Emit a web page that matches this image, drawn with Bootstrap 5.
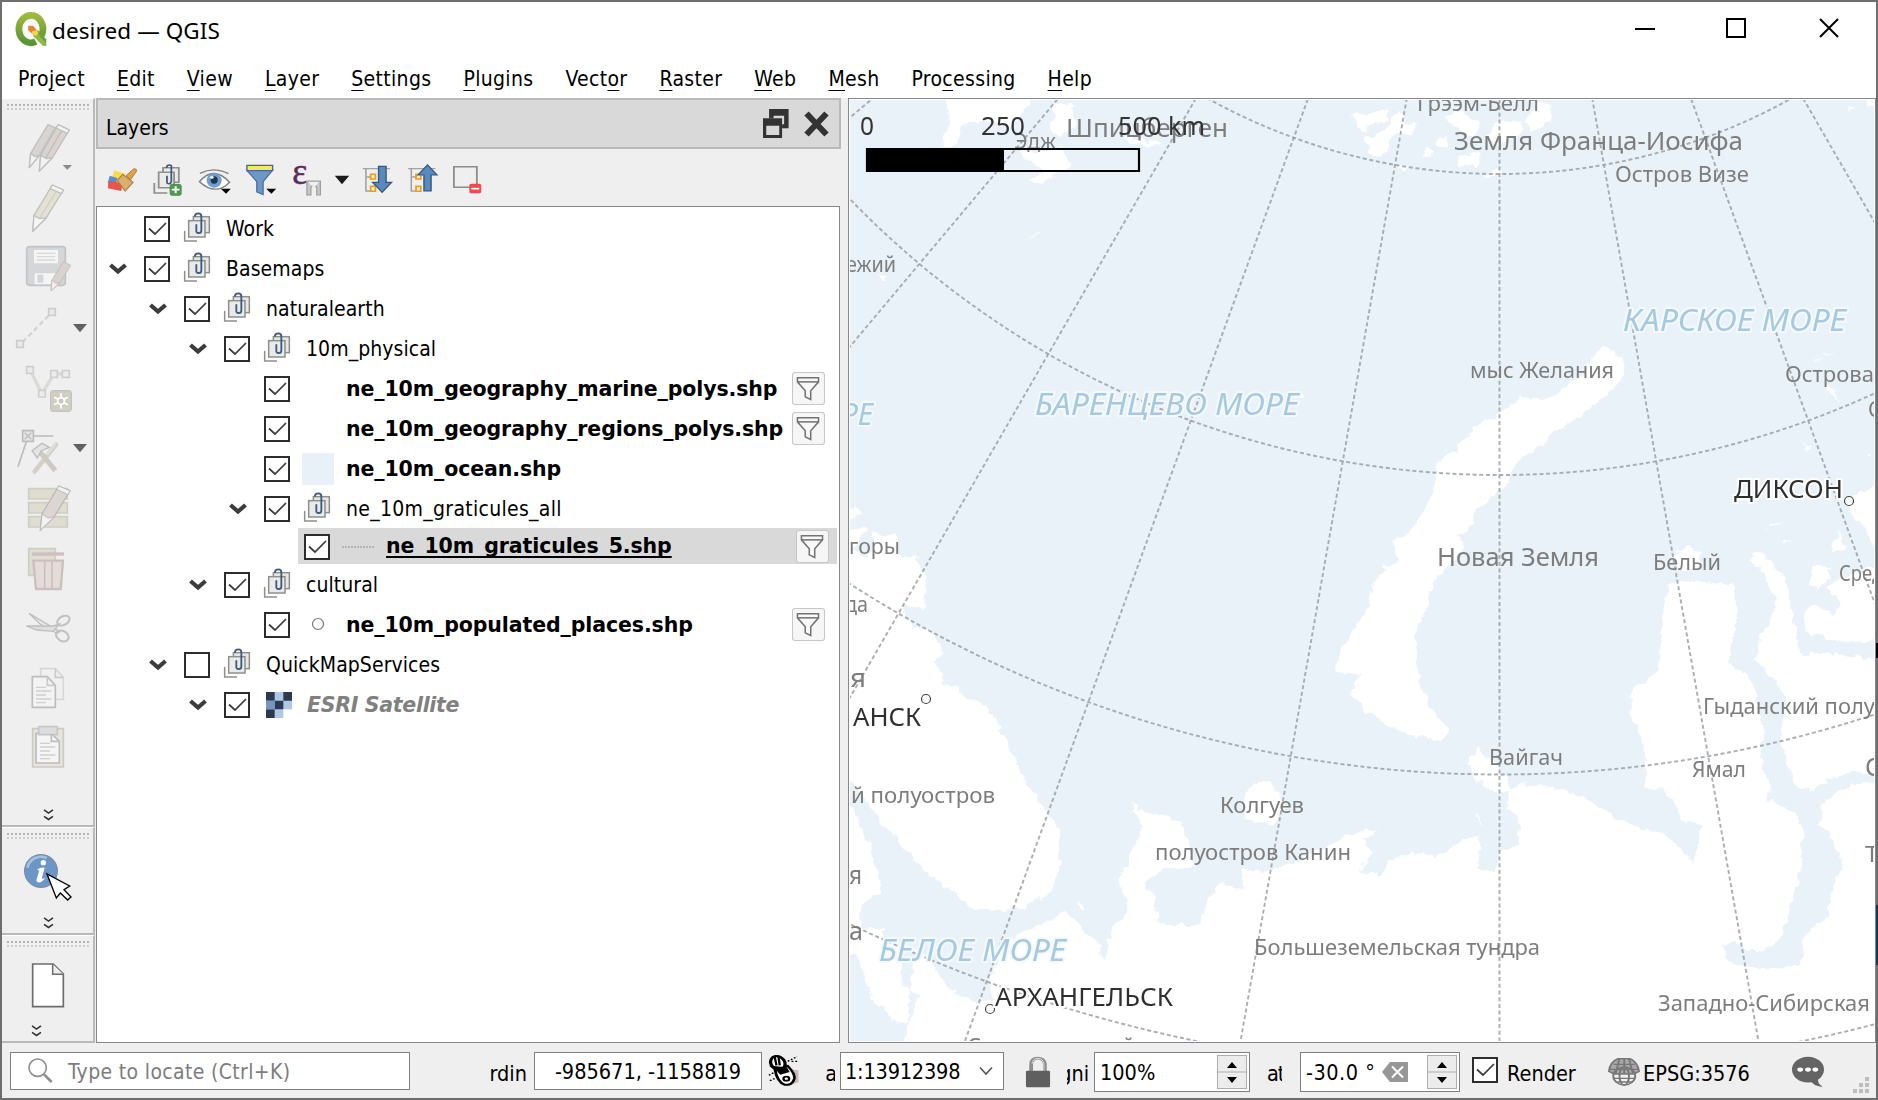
<!DOCTYPE html>
<html lang="en">
<head>
<meta charset="utf-8">
<title>desired — QGIS</title>
<link rel="stylesheet" href="https://cdn.jsdelivr.net/npm/bootstrap@5.3.0/dist/css/bootstrap.min.css">
<style>
html,body{height:1100px;overflow:hidden}
body{width:1878px;font-family:"DejaVu Sans Condensed","DejaVu Sans",sans-serif;font-stretch:condensed;font-size:21px;line-height:26px;color:#000;background:#efefef;white-space:nowrap}
.win{width:1878px;height:1100px;border:2px solid #6e6e6e;background:#efefef}
svg{display:block;flex:none}
.titlebar{height:56px;background:#fff;padding:0 37px 0 13px}
.wtitle{font-family:"Noto Sans",sans-serif;font-size:22.5px;letter-spacing:.1px;margin-left:5px;padding-top:2px}
.menus{height:40px;background:#fff;padding:8px 0 0 16px;gap:32px}
.menus span{letter-spacing:.33px}
.menus u{text-underline-offset:4px;text-decoration-thickness:1.3px;text-decoration-skip-ink:none}
.lyr u{text-underline-offset:3px;text-decoration-thickness:2px;text-decoration-skip-ink:none}
.tools{width:93px}
.toolsec{border-right:2px solid #b9b9b9;border-bottom:2px solid #b9b9b9;border-top:1px solid #fff;width:93px}
.dock{width:745px;margin-left:1px}
.docktitle{height:51px;border:2px solid #b9b9b9;background:#d9d9d9;padding:0 9px 0 8px}
.docktitle span{letter-spacing:0;padding-top:8px}
.ltools{height:57px;padding:14px 0 0 5px}
.ltools svg{margin-right:-.15px}
.tree{width:744px;height:837px;background:#fff;border:1px solid #84878b;padding-top:1px}
.lrow{height:40px;padding:2px 0 0 0}
.lrow.sel{height:36px;padding:1px 8px 0 6px;background:#d9d9d9;margin:0 2px 0 201px}
.lvl0{margin-left:9px}.lvl1{margin-left:49px}.lvl2{margin-left:89px}.lvl3{margin-left:129px}
.arw{width:22px;height:26px;margin-right:16px;overflow:visible}
.chk{width:26px;height:26px;border:2px solid #2d2d2d;background:#fff;flex:none}
.gi{width:26px;height:26px;overflow:visible;margin:0 16px 0 14px}
.sym{width:32px;height:32px;margin:0 12px 0 12px;flex:none}
.lyr{font-family:"DejaVu Sans",sans-serif;font-stretch:normal;font-size:20.5px;font-weight:700;letter-spacing:-.1px;padding-bottom:1px}
.lyr.fst-italic{letter-spacing:-.3px}
.grp{letter-spacing:.07px;padding-bottom:1px}
.grp.wide{letter-spacing:.3px}
.fbtn{width:33px;height:33px;margin:-1px 14px 0 auto}
.mapbox{width:1028px;height:945px;border:1px solid #84878b;background:#fff;margin-left:7px;padding:1px}
.status{height:55px;padding-top:9px}
.fld{height:38px;border:1px solid #7f7f7f;background:#fff;flex:none}
.spin{height:40px}
.clip{overflow:hidden;height:30px;flex:none;margin-top:7px}
.st{font-size:21.5px;letter-spacing:0;flex:none;line-height:30px}
.updn{width:30px;height:34px;border:1px solid #adadad;background:#ececec;margin:2px}
.m{font-family:"Noto Sans","Open Sans",sans-serif;fill:#7d7d7d}
.halo{paint-order:stroke;stroke:#f4f9fc;stroke-width:4px;stroke-linejoin:round}
.sea{font-style:italic;fill:#a5c9e1}
.city{fill:#2f2f2f;paint-order:stroke;stroke:#fff;stroke-width:4px}
</style>
<script src="https://cdn.jsdelivr.net/npm/bootstrap@5.3.0/dist/js/bootstrap.bundle.min.js"></script>
</head>
<body>
<svg width="0" height="0" class="position-absolute">
<symbol id="ck" viewBox="0 0 22 22"><path d="M3 10.5 9 16 20 5" fill="none" stroke="#3b3b3b" stroke-width="1.7"/></symbol>
<symbol id="ar" viewBox="0 0 22 26"><path d="M4.500 9 12 15.500 19.500 9" fill="none" stroke="#3c3c3c" stroke-width="4.200"/></symbol>
<symbol id="gr" viewBox="282 48 78 78" overflow="visible">
<path d="M284 93V123H321" fill="none" stroke="#8e908c" stroke-width="4.500"/>
<rect x="310" y="50" width="48" height="48" fill="#e8e9e6" stroke="#8e908c" stroke-width="4.500"/>
<rect x="296" y="62" width="49" height="49" fill="#eaebe9" stroke="#8e908c" stroke-width="4.500"/>
<path d="M315 50V47Q316 40 325 40T334 48V92Q334 99 326 99T319 92V73" fill="none" stroke="#3d5a80" stroke-width="5.500"/></symbol>
<symbol id="fl" viewBox="877 37 97 97"><rect x="878.500" y="38.500" width="94" height="94" rx="8" fill="#f6f6f6" stroke="#c6c6c6" stroke-width="3"/>
<path d="M893 54H955V66L932 92V118L916 110V92L893 66Z" fill="#f8f8f8" stroke="#737373" stroke-width="4.500"/><path d="M893 66H955" stroke="#737373" stroke-width="4.500"/></symbol>
<symbol id="dv" viewBox="130 0 34 44"><path d="M133 6 147 16 161 6M133 26 147 36 161 26" fill="none" stroke="#333" stroke-width="5"/></symbol>
<symbol id="grip" viewBox="0 0 84 8"><path d="M1 2H84" stroke="#b4b4b4" stroke-width="2.200" stroke-dasharray="2 2"/><path d="M1 6H84" stroke="#c4c4c4" stroke-width="1.500" stroke-dasharray="2 2"/></symbol>
</svg>

<div class="win d-flex flex-column">
  <header class="titlebar d-flex align-items-center">
    <svg width="32" height="36" viewBox="38 40 80 92" preserveAspectRatio="none" style="margin-top:-2px"><defs><linearGradient id="qg" x2="0" y2="1"><stop stop-color="#9fb93a"/><stop offset="1" stop-color="#589632"/></linearGradient></defs><path d="M90 118A30 35 0 1 1 104 103" fill="none" stroke="url(#qg)" stroke-width="17"/><path d="M84 94 96 90 116 112V129H108L84 104Z" fill="#6ba23c"/><path d="M84 104 92 94 116 124V129H108Z" fill="#93b945"/><path d="M71 78H83L95 92 85 102 71 89Z" fill="#ee7f2d"/><path d="M81 91 92 89 97 97 89 104 80 99Z" fill="#f6d64c"/></svg>
    <div class="wtitle">desired — QGIS</div>
    <div class="d-flex ms-auto align-items-center pb-1">
      <svg width="20" height="20"><path d="M0 11H20" stroke="#000" stroke-width="2"/></svg>
      <svg width="20" height="20" style="margin:0 73px 0 71px"><path d="M1 1H19V19H1Z" fill="none" stroke="#000" stroke-width="2"/></svg>
      <svg width="20" height="20"><path d="M1 1 19 19M19 1 1 19" stroke="#000" stroke-width="2"/></svg>
    </div>
  </header>
  <nav class="menus d-flex"><span>Pro<u>j</u>ect</span><span><u>E</u>dit</span><span><u>V</u>iew</span><span><u>L</u>ayer</span><span><u>S</u>ettings</span><span><u>P</u>lugins</span><span>Vect<u>o</u>r</span><span><u>R</u>aster</span><span><u>W</u>eb</span><span><u>M</u>esh</span><span>Pro<u>c</u>essing</span><span><u>H</u>elp</span></nav>

  <main class="d-flex" style="height:945px">
    <aside class="tools d-flex flex-column">
      <section class="toolsec" style="height:729px">
        <svg width="84" height="8" class="ms-1 mt-1"><use href="#grip"/></svg><div style="height:7px"></div>
        <svg width="91" height="60" viewBox="6 84 273 180" stroke-linejoin="round"><g fill="#d9d4d0" stroke="#c0c0c0" stroke-width="4"><path d="M144 104 166 113 118 196 88 233 92 190Z"/><path d="M175 104 208 120 158 202 118 243 122 196Z"/><path d="M92 190 106 200 118 196 88 233ZM122 196 140 206 158 202 118 243ZM175 104 208 120 202 130 168 114Z" fill="#f2f2f2"/><path d="M185 122 138 202" stroke="#c8bcb8"/></g><path d="M188 225H216L202 239Z" fill="#8b8b8b"/></svg>
        <svg width="91" height="60" viewBox="6 264 273 180" stroke-linejoin="round"><g fill="#e2e1d4" stroke="#c0c0bd" stroke-width="4"><path d="M157 285 190 300 139 383 98 424 102 376Z"/><path d="M102 376 119 386 139 383 98 424ZM157 285 190 300 185 311 150 296Z" fill="#f5f5f5"/><path d="M168 306 120 382" stroke="#d0cfc4"/></g></svg>
        <svg width="91" height="60" viewBox="6 444 273 180" stroke-linejoin="round"><rect x="80" y="470" width="116" height="116" rx="9" fill="#d5d6d7" stroke="#c0c4c7" stroke-width="5"/><path d="M102 480H174V520H102ZM104 550H170V583H104Z" fill="#f5f5f5"/><path d="M110 490H166M110 500H166M110 510H166" stroke="#d8d8d8" stroke-width="4"/><path d="M112 554H130V578H112Z" fill="#d5d6d7"/><path d="M190 515 212 526 180 578 153 603 156 570Z" fill="#d9d2ce" stroke="#c4c0be" stroke-width="3"/><path d="M156 570 168 580 180 578 153 603Z" fill="#eee" stroke="#c4c0be" stroke-width="3"/></svg>
        <svg width="91" height="60" viewBox="6 624 273 180"><path d="M68 756 147 676" stroke="#d2d4d2" stroke-width="7" stroke-dasharray="15 9"/><g fill="#e9e9e9" stroke="#cdcdcd" stroke-width="5"><path d="M146 656H166V676H146ZM50 752H70V772H50Z"/></g><path d="M219 702H261L240 727Z" fill="#5f6162"/></svg>
        <svg width="91" height="60" viewBox="6 804 273 180"><path d="M90 840 126 911 162 852H197" fill="none" stroke="#d9dbd6" stroke-width="10"/><g fill="#ebebeb" stroke="#cfcfcf" stroke-width="5"><path d="M80 830H100V850H80ZM152 842H172V862H152ZM187 842H208V862H187ZM116 901H136V921H116Z"/></g><rect x="152" y="902" width="62" height="62" rx="9" fill="#d0cfc3" stroke="#c5c4b8" stroke-width="4"/><path d="M183 910V956M163 922 203 944M203 922 163 944" stroke="#fff" stroke-width="5"/><circle cx="183" cy="933" r="10" fill="#c9c8bd" stroke="#fff" stroke-width="5"/></svg>
        <svg width="91" height="60" viewBox="6 984 273 180"><path d="M82 1046 54 1130M100 1038H160" stroke="#bcbcbc" stroke-width="5"/><path d="M68 1022H100V1054H68Z" fill="#e6e6e6" stroke="#bcbcbc" stroke-width="5"/><path d="M74 1028 94 1048M94 1028 74 1048" stroke="#bcbcbc" stroke-width="4"/><path d="M168 1064 104 1144" stroke="#d3d1c6" stroke-width="14" stroke-linecap="round"/><path d="M120 1086 166 1142" stroke="#cdcabf" stroke-width="15"/><path d="M96 1082 126 1060 148 1072 124 1082 112 1104Z" fill="#e4e4e4" stroke="#bcbcbc" stroke-width="4"/><path d="M140 1094 168 1060" stroke="#ddd" stroke-width="8"/><path d="M219 1062H261L240 1087Z" fill="#5f6162"/></svg>
        <svg width="91" height="60" viewBox="6 54 273 180"><g fill="#dfddcf" stroke="#cfcec3" stroke-width="5"><path d="M86 86H202V117H86ZM86 128H202V159H86ZM86 170H202V201H86Z"/></g><path d="M176 78 210 92 163 170 121 211 126 162Z" fill="#ddd5d1" stroke="#bbb" stroke-width="4"/><path d="M126 162 144 174 163 170 121 211ZM176 78 210 92 204 104 170 88Z" fill="#f2f2f2" stroke="#bbb" stroke-width="3"/></svg>
        <svg width="91" height="60" viewBox="6 234 273 180"><path d="M86 266H166V346H86Z" fill="#dfddcf" stroke="#cfcec3" stroke-width="5"/><path d="M100 302H189L182 387H108Z" fill="#e5dcda" stroke="#cdbfbf" stroke-width="7"/><path d="M96 282H192" stroke="#cdbfbf" stroke-width="10"/><path d="M134 304V386M156 304V386" stroke="#cdbfbf" stroke-width="5"/></svg>
        <svg width="91" height="60" viewBox="6 414 273 180" fill="none" stroke="#bfbfbf" stroke-width="4"><path d="M87 460 180 515 170 520 120 492Z" fill="#e6e6e6"/><path d="M79 498 160 498 178 492 160 514 110 510Z" fill="#dedede"/><ellipse cx="190" cy="482" rx="20" ry="13" transform="rotate(-30 190 482)" stroke="#c4bfbf" stroke-width="6"/><ellipse cx="187" cy="528" rx="20" ry="15" transform="rotate(30 187 528)" stroke="#c4bfbf" stroke-width="6"/></svg>
        <svg width="91" height="60" viewBox="6 594 273 180" stroke-width="5"><path d="M122 626H166L190 652V718H122Z" fill="#f0f0f0" stroke="#d8d8d8"/><path d="M97 650H142L166 676V742H97Z" fill="#f3f3f3" stroke="#bdbdbd"/><path d="M142 650V676H166M166 626V652H190" fill="none" stroke="#c9c9c9"/><path d="M108 682H138M108 693H154M108 705H138M108 717H154M108 728H138" stroke="#cfcfcf" stroke-width="4"/></svg>
        <svg width="91" height="60" viewBox="6 774 273 180" stroke-width="5"><path d="M98 806H190V921H98Z" fill="#e6e5df" stroke="#cccac1"/><path d="M108 820H154L178 844V909H108Z" fill="#f5f5f5" stroke="#bdbdbd"/><path d="M116 800H172V824H116Z" fill="#ddd" stroke="#c6c6c6"/><path d="M154 822V844H178" fill="none" stroke="#bdbdbd"/><path d="M120 850H150M120 861H166M120 873H150M120 885H166M120 896H150" stroke="#cfcfcf" stroke-width="4"/></svg>
        <svg width="11" height="14" style="margin:30px 0 0 41px"><use href="#dv"/></svg>
      </section>
      <section class="toolsec" style="height:108px">
        <svg width="84" height="8" class="ms-1 mt-1"><use href="#grip"/></svg>
        <svg width="91" height="74" viewBox="6 122 273 222"><circle cx="123" cy="215" r="49" fill="#6b97c8" stroke="#7d8fa5" stroke-width="4"/><path d="M82 205A42 42 0 0 1 140 176" fill="none" stroke="#a5c1e0" stroke-width="8"/><circle cx="130" cy="190" r="8" fill="#fff"/><path d="M111 211Q120 203 134 205L125 237Q129 240 135 236 126 251 113 249 107 246 110 239L118 214Z" fill="#fff"/><path d="M141 224 169 296 181 281 203 302 213 293 192 271 209 260Z" fill="#fff" stroke="#000" stroke-width="4"/></svg>
        <svg width="11" height="14" style="margin:2px 0 0 41px"><use href="#dv"/></svg>
      </section>
      <section class="toolsec" style="height:108px">
        <svg width="84" height="8" class="ms-1 mt-1"><use href="#grip"/></svg>
        <svg width="91" height="74" viewBox="6 446 273 222"><path d="M98 494H160L190 524V622H98Z" fill="#fff" stroke="#6c6c6c" stroke-width="5"/><path d="M158 494V525H190" fill="#eee" stroke="#6c6c6c" stroke-width="4.500"/></svg>
        <svg width="11" height="14" style="margin:2px 0 0 29px"><use href="#dv"/></svg>
      </section>
    </aside>

    <section class="dock">
      <div class="docktitle d-flex align-items-center"><span>Layers</span>
        <svg class="ms-auto" width="26" height="29" viewBox="398 330 64 87" preserveAspectRatio="none"><path d="M418 330H461V388H445V376H450V350H424V358H413V330Z" fill="#333"/><path d="M398 358H445V417H398ZM406 380V408H438V380Z" fill="#333" fill-rule="evenodd"/></svg>
        <svg width="27" height="27" viewBox="0 0 27 27" style="margin-left:14px"><path d="M3.500 3.500 23.500 24.500M23.500 3.500 3.500 24.500" stroke="#333" stroke-width="6"/></svg>
      </div>
      <div class="ltools d-flex">
        <svg width="45.500" height="36.700" viewBox="255 490 115 110" preserveAspectRatio="none"><path d="M288 512 316 522 300 550 281 545Z" fill="#f7dc4e"/><path d="M277 528 296 535 292 560 272 550Z" fill="#5b8dd6"/><path d="M274 545 310 550 306 574 272 566Z" fill="#e8554d"/><path d="M318 528 338 507Q346 507 345 514L330 540Z" fill="#e0a344" stroke="#9a6a22" stroke-width="2"/><path d="M296 542 310 524 336 548 316 574Z" fill="#dcb06b" stroke="#b57f3e" stroke-width="3"/></svg>
        <svg width="45.500" height="36.700" viewBox="370 490 115 110" preserveAspectRatio="none"><path d="M391 550V580H424" fill="none" stroke="#8e908c" stroke-width="4.500"/><g fill="#eaebe9" stroke="#8e908c" stroke-width="4.500"><path d="M413 504H453V548H413Z"/><path d="M402 518H441V564H402Z"/></g><path d="M422 505Q422 496 429 496T434 504V545Q434 552 428 552T423 545V528" fill="none" stroke="#3d5a80" stroke-width="4.500"/><rect x="431" y="554" width="28" height="33" rx="5" fill="#4f9a51" stroke="#3f7f43" stroke-width="2"/><path d="M445 560V581M435 570H455" stroke="#fff" stroke-width="5"/></svg>
        <svg width="45.500" height="36.700" viewBox="485 490 115 110" preserveAspectRatio="none"><path d="M505 521Q540 500 577 522" fill="none" stroke="#7d8287" stroke-width="4"/><path d="M504 546Q540 496 580 548 545 590 504 546Z" fill="#fff" stroke="#7d8287" stroke-width="4"/><ellipse cx="541" cy="542" rx="19" ry="22" fill="#6f9dd2"/><ellipse cx="541" cy="541" rx="9" ry="11" fill="#1f3550"/><circle cx="535" cy="533" r="5" fill="#dceaf8"/><path d="M558 567H583L571 582Z"/></svg>
        <svg width="45.500" height="36.700" viewBox="600 490 115 110" preserveAspectRatio="none"><path d="M625 512 650 546V577L666 585V546L690 512Z" fill="#6c97c9" stroke="#41699a" stroke-width="3"/><path d="M625 497H690V513H625Z" fill="#f5ea5e" stroke="#41699a" stroke-width="3.500"/><path d="M674 567H699L687 582Z"/></svg>
        <svg width="45.500" height="36.700" viewBox="715 490 115 110" preserveAspectRatio="none"><text x="741" y="554" font-family="Liberation Serif,serif" font-size="112" textLength="38" lengthAdjust="spacingAndGlyphs" fill="#5a2a63" stroke="#5a2a63" stroke-width="1.500">ε</text><path d="M778 544H812V586H803V564L795 550 788 564V586H778Z" fill="#c9c9c9" stroke="#9b9b9b" stroke-width="3"/><path d="M782 547H808L801 558H790Z" fill="#f2f2f2"/></svg>
        <svg width="28" height="36.700" viewBox="830 490 70 110" preserveAspectRatio="none"><path d="M847 528H883L865 554Z" fill="#1a1a1a"/></svg>
        <svg width="45.500" height="36.700" viewBox="900 490 115 110" preserveAspectRatio="none"><path d="M917 507H986M925 507V574H945M925 532H940" fill="none" stroke="#a3a3a3" stroke-width="4"/><path d="M937 524H949V538H937ZM937 560H949V575H937Z" fill="#fff3b8" stroke="#f29a1d" stroke-width="4.500"/><path d="M957 500H976V548H990L966 578 942 548H957Z" fill="#5b89bd" stroke="#32587f" stroke-width="3.500"/></svg>
        <svg width="45.500" height="36.700" viewBox="1015 490 115 110" preserveAspectRatio="none"><path d="M1033 507H1102M1041 507V574H1061M1041 532H1056" fill="none" stroke="#a3a3a3" stroke-width="4"/><path d="M1053 524H1065V538H1053ZM1053 560H1065V575H1053Z" fill="#fff3b8" stroke="#f29a1d" stroke-width="4.500"/><path d="M1073 574H1091V526H1106L1082 496 1058 526H1073Z" fill="#5b89bd" stroke="#32587f" stroke-width="3.500"/></svg>
        <svg width="45.500" height="36.700" viewBox="1130 490 115 110" preserveAspectRatio="none"><path d="M1150 501H1208V563H1150Z" fill="#efefef" stroke="#8b8d89" stroke-width="4.500"/><rect x="1189" y="552" width="30" height="29" rx="5" fill="#ee4b50"/><path d="M1194 567H1214" stroke="#fff" stroke-width="5"/></svg>
      </div>
      <div class="tree">
        <div class="lrow d-flex align-items-center lvl0"><div class="arw"></div><div class="chk"><svg width="22" height="22"><use href="#ck"/></svg></div><svg class="gi"><use href="#gr"/></svg><span class="grp">Work</span></div>
        <div class="lrow d-flex align-items-center lvl0"><svg class="arw"><use href="#ar"/></svg><div class="chk"><svg width="22" height="22"><use href="#ck"/></svg></div><svg class="gi"><use href="#gr"/></svg><span class="grp">Basemaps</span></div>
        <div class="lrow d-flex align-items-center lvl1"><svg class="arw"><use href="#ar"/></svg><div class="chk"><svg width="22" height="22"><use href="#ck"/></svg></div><svg class="gi"><use href="#gr"/></svg><span class="grp">naturalearth</span></div>
        <div class="lrow d-flex align-items-center lvl2"><svg class="arw"><use href="#ar"/></svg><div class="chk"><svg width="22" height="22"><use href="#ck"/></svg></div><svg class="gi"><use href="#gr"/></svg><span class="grp">10m_physical</span></div>
        <div class="lrow d-flex align-items-center lvl3"><div class="arw"></div><div class="chk"><svg width="22" height="22"><use href="#ck"/></svg></div><div class="sym"></div><span class="lyr">ne_10m_geography_marine_polys.shp</span><svg class="fbtn"><use href="#fl"/></svg></div>
        <div class="lrow d-flex align-items-center lvl3"><div class="arw"></div><div class="chk"><svg width="22" height="22"><use href="#ck"/></svg></div><div class="sym"></div><span class="lyr">ne_10m_geography_regions_polys.shp</span><svg class="fbtn"><use href="#fl"/></svg></div>
        <div class="lrow d-flex align-items-center lvl3"><div class="arw"></div><div class="chk"><svg width="22" height="22"><use href="#ck"/></svg></div><div class="sym" style="background:#e8f1f7"></div><span class="lyr">ne_10m_ocean.shp</span></div>
        <div class="lrow d-flex align-items-center lvl3"><svg class="arw"><use href="#ar"/></svg><div class="chk"><svg width="22" height="22"><use href="#ck"/></svg></div><svg class="gi"><use href="#gr"/></svg><span class="grp wide">ne_10m_graticules_all</span></div>
        <div class="lrow sel d-flex align-items-center"><div class="chk"><svg width="22" height="22"><use href="#ck"/></svg></div><svg class="sym"><path d="M0 16H32" stroke="#a9a9a9" stroke-width="1.500" stroke-dasharray="2 1"/></svg><span class="lyr"><u>ne_10m_graticules_5.shp</u></span><svg class="fbtn me-0"><use href="#fl"/></svg></div>
        <div class="lrow d-flex align-items-center lvl2"><svg class="arw"><use href="#ar"/></svg><div class="chk"><svg width="22" height="22"><use href="#ck"/></svg></div><svg class="gi"><use href="#gr"/></svg><span class="grp">cultural</span></div>
        <div class="lrow d-flex align-items-center lvl3"><div class="arw"></div><div class="chk"><svg width="22" height="22"><use href="#ck"/></svg></div><svg class="sym"><circle cx="16" cy="15" r="5.500" fill="#fff" stroke="#777" stroke-width="1.200"/></svg><span class="lyr">ne_10m_populated_places.shp</span><svg class="fbtn"><use href="#fl"/></svg></div>
        <div class="lrow d-flex align-items-center lvl1"><svg class="arw"><use href="#ar"/></svg><div class="chk"></div><svg class="gi"><use href="#gr"/></svg><span class="grp">QuickMapServices</span></div>
        <div class="lrow d-flex align-items-center lvl2"><svg class="arw"><use href="#ar"/></svg><div class="chk"><svg width="22" height="22"><use href="#ck"/></svg></div><svg width="26" height="26" viewBox="0 0 3 3" style="margin:0 15px 0 16px"><path fill="#b0c8e6" d="M0 0H3V3H0Z"/><path fill="#2c3a50" d="M0 0H1V1H0ZM2 0H3V1H2ZM1 1H2V2H1ZM0 2H1V3H0Z"/><path fill="#fff" d="M2 2H3V3H2Z"/><path fill="#7795bd" d="M0 1H1V2H0Z"/></svg><span class="lyr fst-italic" style="color:#808080">ESRI Satellite</span></div>
      </div>
    </section>

    <section class="mapbox">
      <svg width="1024" height="941" viewBox="850 100 1024 941">
        <defs><filter id="coast" x="-5%" y="-5%" width="110%" height="110%"><feTurbulence type="fractalNoise" baseFrequency=".1" numOctaves="3" seed="4"/><feDisplacementMap in="SourceGraphic" scale="10" xChannelSelector="R" yChannelSelector="G"/></filter></defs>
        <path d="M850 100H1874V1041H850Z" fill="#e9f2f8"/>
        <g fill="#fff" filter="url(#coast)">
          <g transform="translate(845 560) scale(.6588 .3333)">
            <path d="M-30-20 20-20 30 20 65 60 75 0 105-20 122 50 122 140 85 135 100 200 130 210 150 280 135 310 150 340 145 370 170 385 190 420 215 440 235 510 262 620 295 730 325 800 325 930 310 1000 270 1045 220 1053 190 1040 160 990 120 930 80 840 55 790 40 740 25 700 10 665-30 665Z"/>
            <path d="M-30 720 12 740 25 800 40 870 50 930 55 1000 25 1030 22 1100 60 1110 55 1150 82 1150 90 1200 85 1280 110 1300 108 1340 98 1385 75 1385 40 1320 35 1260 15 1180-30 1180-30 1500 1600 1500 1600 670 1562 670 1530 668 1485 730 1480 790 1500 840 1515 920 1500 990 1490 1070 1460 1120 1450 1220 1380 1225 1340 1205 1330 1150 1360 1155 1380 1180 1410 1160 1425 1110 1440 1010 1450 940 1455 800 1440 760 1400 720 1405 680 1390 600 1395 500 1385 450 1385 400 1370 350 1340 300 1345 250 1355 150 1350 80 1290 60 1250 75 1240 200 1235 330 1200 380 1192 430 1198 500 1212 540 1215 690 1240 680 1255 720 1270 780 1300 790 1295 850 1285 920 1280 880 1240 820 1170 780 1140 730 1090 690 1030 672 1010 690 1005 740 1025 790 1022 850 995 880 985 935 960 925 965 870 960 825 930 850 900 890 860 875 825 905 810 950 780 930 800 880 788 840 810 805 750 840 720 870 680 910 640 935 600 930 605 990 590 980 570 970 550 1020 540 1098 475 1090 470 1010 455 980 465 945 490 925 530 920 520 840 510 790 480 765 450 755 433 720 440 750 452 800 440 860 425 920 412 960 425 1000 430 1060 415 1090 400 1140 393 1210 385 1150 370 1120 350 1080 335 1060 290 1100 255 1130 240 1170 220 1260 225 1320 200 1325 160 1290 130 1200 105 1170 90 1500-30 1500Z"/>
            <path d="M1375-20 1402 60 1415 140 1390 230 1380 300 1400 340 1425 400 1425 470 1420 560 1445 680 1470 690 1500 650 1530 635 1600 655 1600 300 1545 295 1500 280 1450 280 1435 130 1428 60 1395-20Z"/>
            <path d="M1470 40 1490 20 1495 60 1475 90ZM1505 60 1600-10 1600 250 1562 245 1500 245 1465 220 1452 170 1470 130 1500 160 1512 130 1490 80Z"/>
            <path d="M820 20 800 110 778 200 765 230 750 280 745 335 780 350 765 400 790 450 820 490 850 520 905 545 917 510 890 450 875 380 865 310 865 230 880 150 895 60 910-20Z"/>
            <path d="M605 700 620 668 645 665 660 700 665 750 650 785 620 795 605 760ZM960 560 945 600 960 660 985 700 1012 700 1002 650 985 610ZM350 1030 360 1050 355 1020ZM130 230 150 280 135 310 125 290ZM955 760 970 800 960 760Z"/>
          </g>
          <g transform="translate(1300 95) scale(.3686 .3333)">
            <path d="M830 755 875 790 885 840 850 880 800 930 740 980 690 1010 640 1060 600 1090 570 1150 530 1200 480 1240 470 1290 430 1320 445 1370 380 1440 340 1520 185 1520 210 1440 275 1410 250 1345 310 1300 340 1240 370 1180 365 1110 420 1070 470 1000 550 950 600 905 660 915 720 880 770 830 800 770Z"/>
            <path d="M1010 1385 1050 1350 1085 1370 1080 1410 1040 1430ZM1220 1395 1240 1380 1250 1410 1290 1430 1325 1520 1290 1520 1260 1430 1225 1410ZM1600 1150 1500 1205 1490 1250 1530 1300 1570 1370 1600 1400ZM1460 1310 1485 1365 1440 1370ZM1395 1420 1440 1415 1400 1480 1380 1470ZM1370 1045 1390 1055 1380 1065ZM1260 1310 1280 1285 1325 1290 1275 1295ZM1310 1340 1335 1342 1315 1348ZM1532 1080 1548 1075 1545 1090ZM1420 775 1450 768 1425 780ZM1390 795 1420 792 1400 798ZM1430 870 1450 885 1460 920 1435 900ZM-8 885 5 900-8 905Z"/>
            <path d="M140 60 190 55 240 45 240 75 190 85 180 105ZM240 90 270 50 285 85 320 90 300 120 250 120 230 180 190 175 175 135 230 110ZM340 155 365 165 360 185 330 185ZM375 130 395 120 400 155 375 150ZM390 70 440 45 490 90 470 125 430 100ZM430 180 490 170 480 215 425 218ZM500 130 545 80 600 80 600 120 530 145ZM610 80 640 30 680 30 680 80 630 110ZM255 205 295 215 280 230ZM495 245 540 215 550 240 515 250ZM1530 15 1570 10 1570 40ZM1480 30 1505 35 1490 50Z"/>
          </g>
          <g transform="translate(845 95) scale(.3333)">
            <path d="M300 0 570 0 530 60 480 100 440 80 350 90 330 155 292 150 315 80ZM630 30 685 30 690 90 655 130 620 100ZM530 165 590 175 650 150 680 210 630 235 590 270 550 255 600 225 530 190ZM830 125 930 140 945 155 850 138ZM550 432 598 406 575 425ZM105 545 125 535 115 560ZM1525 65 1565 60 1565 110 1540 100ZM-20 1240 50 1245 25 1275-20 1275ZM-20 1340 20 1300 70 1300 20 1360 60 1390 90 1350 85 1310 160 1320 150 1380 190 1400 180 1430 230 1480 225 1520-20 1520Z"/>
          </g>
        </g>
        <g fill="none" stroke="#9aa0a5" stroke-opacity=".85" stroke-width="1.900" stroke-dasharray="4 2.700">
          <circle cx="1499.500" cy="-427.500" r="601.500"/><circle cx="1499.500" cy="-427.500" r="902.500"/><circle cx="1499.500" cy="-427.500" r="1202"/><circle cx="1499.500" cy="-427.500" r="1499.500"/>
          <g id="merid"></g>
        </g>
        <g fill="#fff" stroke="#444" stroke-width="1.200"><circle cx="926" cy="699" r="4.500"/><circle cx="990" cy="1009" r="4.500"/><circle cx="1849" cy="501" r="4.500"/></g>
        <g class="m" id="labels"></g>
        <g class="m" style="fill:#333" font-size="26"><text x="860" y="135" textLength="14" lengthAdjust="spacingAndGlyphs">0</text><text x="981" y="135" textLength="44" lengthAdjust="spacingAndGlyphs">250</text><text x="1118" y="135" textLength="87" lengthAdjust="spacingAndGlyphs">500 km</text></g>
        <path d="M867 149H1139V171H867Z" fill="none" stroke="#000" stroke-width="2.200"/><path d="M867 149H1004V171H867Z"/>
      </svg>
    </section>
  </main>

  <footer class="status d-flex">
    <div class="fld d-flex" style="width:400px;margin-left:8px;color:#7d7d7d"><svg width="25" height="25" viewBox="83 773 75 75" style="margin:5px 15px 0 17px"><circle cx="112" cy="802" r="26" fill="none" stroke="#8f8f8f" stroke-width="5"/><path d="M131 822 154 845" stroke="#8f8f8f" stroke-width="8"/></svg><span style="padding-top:6px;letter-spacing:.35px">Type to locate (Ctrl+K)</span></div>
    <div class="clip d-flex justify-content-end" style="width:37px;margin-left:80px"><span class="st">ordin</span></div>
    <div class="fld text-center st" style="width:228px;margin-left:7px;padding:4px 0 0 0">-985671, -1158819</div>
    <svg width="32" height="34" viewBox="780 76 68 102" preserveAspectRatio="none" style="margin:2px 0 0 6px"><path d="M815 120 845 125 845 160 820 174Z" fill="#cbb9b9"/><ellipse cx="801" cy="103" rx="15" ry="21" fill="#fff" stroke="#000" stroke-width="7" transform="rotate(-15 801 103)"/><path d="M794 84 798 110M802 82 805 110M788 114 814 118 800 128Z" fill="#000" stroke="#000" stroke-width="5"/><path d="M795 124 822 112Q838 135 836 150 832 172 815 168 800 160 795 124Z" fill="#fff" stroke="#000" stroke-width="6"/><path d="M797 124 820 116 826 130 806 138Z"/><circle cx="819" cy="150" r="6" fill="#fff" stroke="#000" stroke-width="5"/><path d="M822 98 842 84M830 98 843 98M782 140 792 132M784 156 794 150" stroke="#000" stroke-width="4" stroke-dasharray="4 4"/></svg>
    <div class="clip d-flex justify-content-end" style="width:9px;margin-left:26px"><span class="st" style="margin-right:-2px">ca</span></div>
    <div class="fld d-flex st" style="width:164px;margin-left:5px;padding:4px 10px 0 4px;letter-spacing:-.2px">1:13912398<svg class="ms-auto" width="14" height="14" style="margin-top:7px"><path d="M1 3.500 7 10 13 3.500" fill="none" stroke="#555" stroke-width="1.600"/></svg></div>
    <svg width="26" height="32" viewBox="1324 82 55 94" preserveAspectRatio="none" style="margin:4px 0 0 21px"><path d="M1337 128V105Q1338 88 1351 88T1366 105V128" fill="none" stroke="#8e908e" stroke-width="8"/><path d="M1339 105Q1340 89 1351 89T1364 105V128" fill="none" stroke="#e6e6e6" stroke-width="2"/><rect x="1326" y="125" width="51" height="49" rx="3" fill="#5f5f5f"/></svg>
    <div class="clip d-flex justify-content-end" style="width:21px;margin-left:16px"><span class="st" style="margin-right:-8px">gnif</span></div>
    <div class="fld spin d-flex st" style="width:156px;margin-left:6px;padding:0 0 0 5px"><span style="padding-top:5px">100%</span><div class="updn ms-auto"><svg width="28" height="32"><path d="M0 16H28" stroke="#adadad"/><path d="M9 12H19L14 6ZM9 21H19L14 27Z"/></svg></div></div>
    <div class="clip" style="width:15px;margin-left:17px"><span class="st" style="letter-spacing:-1px">at</span></div>
    <div class="fld spin d-flex st" style="width:160px;margin-left:18px;padding:0 0 0 5px"><span style="padding-top:5px;letter-spacing:.5px">-30.0 °</span><svg width="27" height="20" style="margin:9px 0 0 7px"><path d="M0 10 8 0H26V20H8Z" fill="#979797"/><path d="M10 4.500 21 15.500M21 4.500 10 15.500" stroke="#fff" stroke-width="2"/></svg><div class="updn ms-auto"><svg width="28" height="32"><path d="M0 16H28" stroke="#adadad"/><path d="M9 12H19L14 6ZM9 21H19L14 27Z"/></svg></div></div>
    <div class="chk" style="margin:5px 0 0 12px"><svg width="22" height="22"><use href="#ck"/></svg></div>
    <div class="clip st" style="width:76px;margin-left:9px">Render</div>
    <svg width="32" height="28" viewBox="1002 84 67 84" preserveAspectRatio="none" style="margin:6px 0 0 25px" fill="none" stroke="#777" stroke-width="4"><path d="M1004 124Q1006 96 1023 86H1048Q1064 96 1067 124L1056 132H1015Z" fill="#a8a8a8"/><path d="M1006 118H1066M1014 103H1058M1026 87 1018 130M1036 86V132M1046 87 1054 130"/><ellipse cx="1036" cy="138" rx="23" ry="27"/><ellipse cx="1036" cy="138" rx="10" ry="27"/><path d="M1014 145H1058M1020 156H1052"/></svg>
    <div class="clip st" style="width:115px;margin-left:3px">EPSG:3576</div>
    <svg width="34" height="32" viewBox="1387 82 70 94" preserveAspectRatio="none" style="margin:4px 0 0 33px"><ellipse cx="1422" cy="122" rx="33" ry="38" fill="#646464"/><path d="M1425 155 1437 168 1452 174 1444 162 1442 150Z" fill="#646464"/><g fill="#fff"><circle cx="1406" cy="122" r="6"/><circle cx="1422" cy="122" r="6"/><circle cx="1437" cy="122" r="6"/></g></svg>
    <svg width="18" height="18" style="margin:25px 0 0 27px" fill="#bdbdbd"><path d="M13 0H17V4H13ZM13 6H17V10H13ZM7 6H11V10H7ZM13 12H17V16H13ZM7 12H11V16H7ZM1 12H5V16H1Z"/></svg>
  </footer>
</div>
<svg class="position-absolute end-0 top-0" width="2" height="1100"><path d="M0 643H2V658H0Z"/><path d="M0 905H2V965H0Z" fill="#17355f"/></svg>
<script>
// Meridians every 10 degrees, radiating from the pole above the canvas
const pole=[1499.5,-427.5];
document.getElementById('merid').innerHTML=[-50,-40,-30,-20,-10,0,10,20,30].map(a=>{const r=a*Math.PI/180;return `<path d="M${pole[0]+480*Math.sin(r)} ${pole[1]+480*Math.cos(r)}L${pole[0]+1700*Math.sin(r)} ${pole[1]+1700*Math.cos(r)}"/>`}).join('');
// [text, x, baseline, width, class, font size]
const L=[
['Шпицберген',1066,137,162,'',25.5],['Эдж',1014,149,42,'',21.5],['ежий',846,272,50,'',22],
['БАРЕНЦЕВО МОРЕ',1035,415,264,'sea halo',31],['МОРЕ',795,425,78,'sea halo',31],['горы',849,554,51,'',22],
['Грээм-Белл',1417,111,122,'',22],['Земля Франца-Иосифа',1454,150,289,'',25.5],['Остров Визе',1615,182,134,'',22],
['КАРСКОЕ МОРЕ',1623,331,223,'sea halo',31],['мыс Желания',1470,378,144,'',22],['Острова',1785,382,89,'',22],['О',1868,417,16,'',22],
['ДИКСОН',1734,498,109,'city',26],['Новая Земля',1437,566,162,'',25.5],['Белый',1653,570,68,'',22],['Среднее',1839,581,76,'',22],
['да',845,612,23,'',22],['я',850,687,16,'',25.5],['АНСК',853,726,68,'city',26],
['й полуостров',851,803,144,'',22],['я',849,884,13,'',25.5],['а',849,940,14,'',25.5],
['БЕЛОЕ МОРЕ',879,961,187,'sea halo',31],['АРХАНГЕЛЬСК',995,1006,178,'city',26],
['Вайгач',1489,765,74,'',22],['Колгуев',1220,813,84,'',22],['полуостров Канин',1155,860,196,'',22],
['Гыданский полу',1703,714,172,'',22],['Ямал',1692,777,54,'',22],['С',1865,776,16,'',25.5],['Т',1865,862,14,'',22],
['Большеземельская тундра',1254,955,286,'',22],['Западно-Сибирская',1658,1011,212,'',22],['С',967,1054,14,'',22],['й',1122,1054,13,'',22]];
document.getElementById('labels').innerHTML=L.map(([t,x,y,w,c,s])=>`<text class="${c}" x="${x}" y="${y}" font-size="${s}" textLength="${w}" lengthAdjust="spacingAndGlyphs">${t}</text>`).join('');
</script>
</body>
</html>
